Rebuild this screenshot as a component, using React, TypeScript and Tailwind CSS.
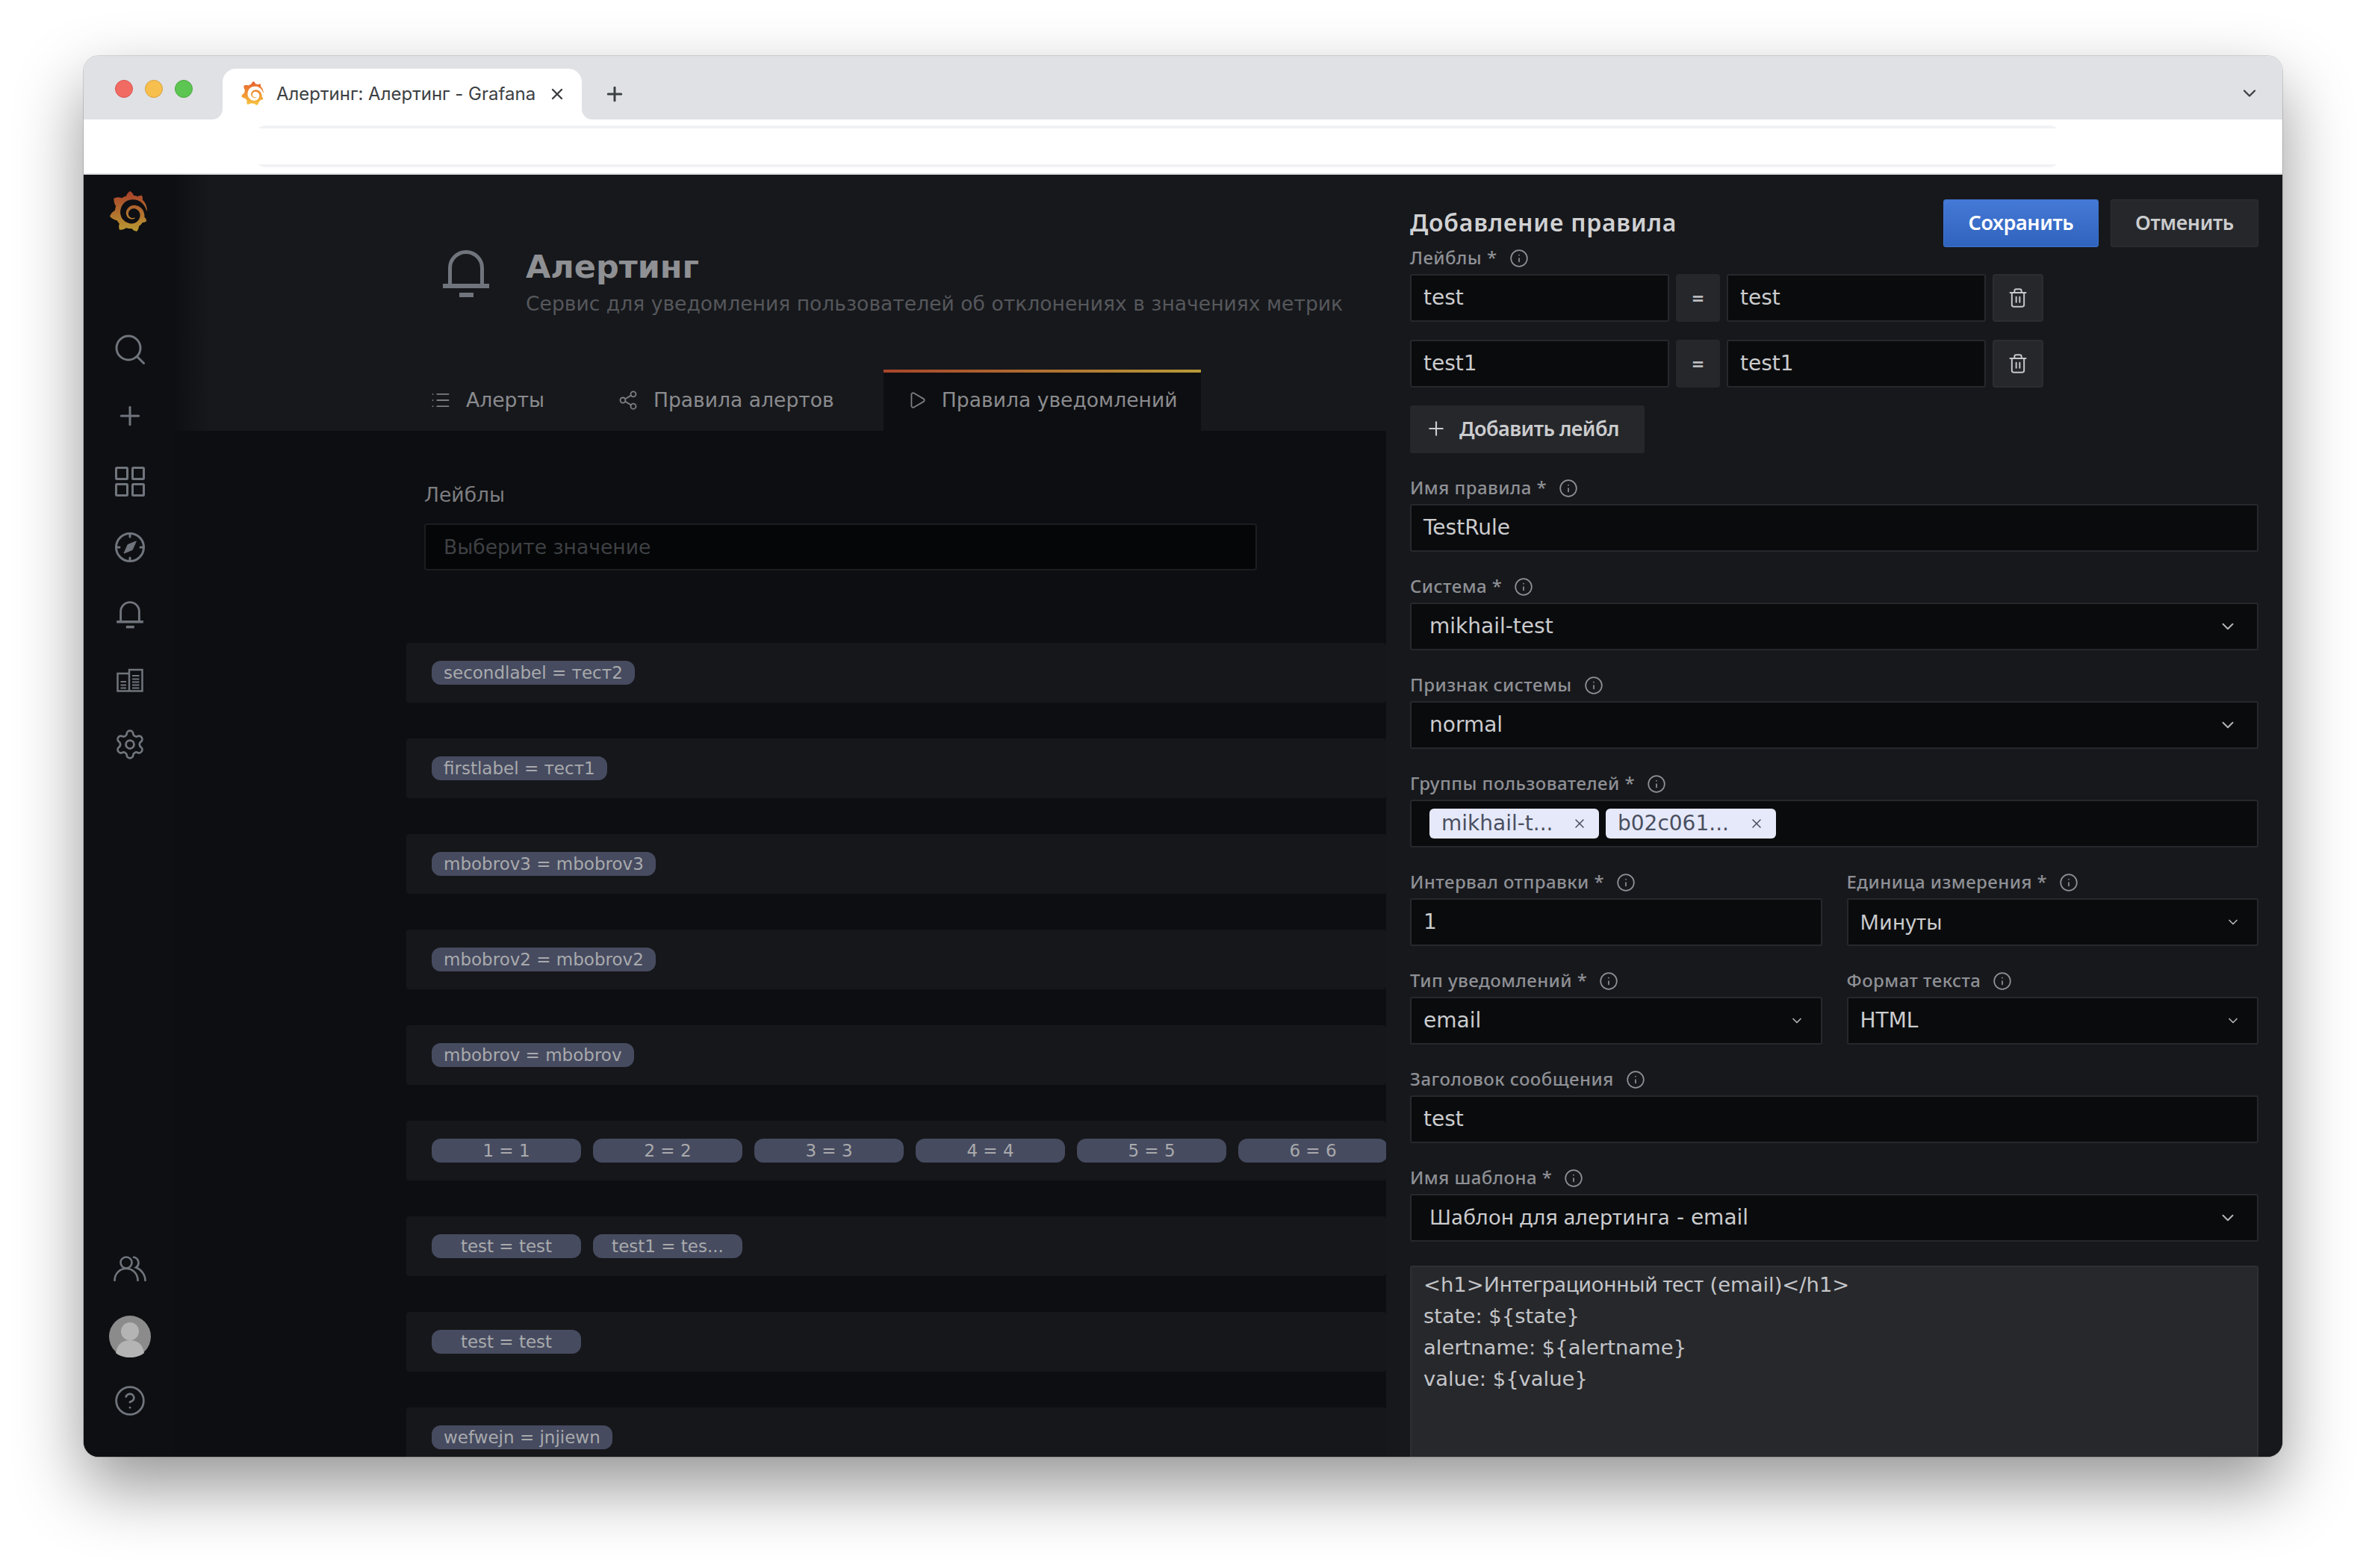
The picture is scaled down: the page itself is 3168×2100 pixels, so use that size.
import React from "react";
import { SiGrafana } from "react-icons/si";
import { ChevronDown, CircleHelp, Info, List, Play, Plus, Settings, Share2, Trash2, X } from "lucide-react";

function Gradients() {
  return (
    <svg width="0" height="0" className="absolute">
      <defs>
        <linearGradient id="logoDim" x1="0" y1="0" x2="0" y2="1">
          <stop offset="0" stopColor="#a8402a" />
          <stop offset="1" stopColor="#b99a32" />
        </linearGradient>
        <linearGradient id="logoBright" x1="0" y1="0" x2="0" y2="1">
          <stop offset="0" stopColor="#e8602c" />
          <stop offset="1" stopColor="#f7c53f" />
        </linearGradient>
      </defs>
    </svg>
  );
}

function Mixed({ text, cyr = "tracking-[0.3px]", latin = "text-[28px]" }: { text: string; cyr?: string; latin?: string }) {
  const parts = text.split(/([\u0400-\u04FF]+(?: [\u0400-\u04FF]+)*)/).filter(Boolean);
  return (
    <>
      {parts.map((p, i) =>
        /[\u0400-\u04FF]/.test(p) ? (
          <span key={i} className={cyr}>{p}</span>
        ) : (
          <span key={i} className={`whitespace-pre font-['DejaVu_Sans',sans-serif] ${latin}`}>{p}</span>
        )
      )}
    </>
  );
}

function BellIcon({ w, h }: { w: number; h: number }) {
  return (
    <svg width={w} height={h} viewBox="0 0 62 66" fill="none" className="shrink-0">
      <path d="M9.5 49V26A21.5 21.5 0 0 1 52.5 26V49" stroke="#70757d" strokeWidth="5" />
      <rect x="0" y="47" width="62" height="6" fill="#70757d" />
      <rect x="22" y="59" width="19" height="6" fill="#70757d" />
    </svg>
  );
}

const sideIcon = "text-[#70757d]";

function SearchIcon() {
  return (
    <svg width="40" height="40" viewBox="0 0 40 40" fill="none" stroke="#70757d" strokeWidth="3" strokeLinecap="round">
      <circle cx="18" cy="18" r="16" />
      <path d="M30 30l8.500 8.500" />
    </svg>
  );
}
function GridIcon() {
  return (
    <svg width="40" height="40" viewBox="0 0 40 40" fill="none" stroke="#70757d" strokeWidth="3">
      <rect x="1.500" y="1.500" width="15" height="15" rx="1" />
      <rect x="23.500" y="1.500" width="15" height="15" rx="1" />
      <rect x="1.500" y="23.500" width="15" height="15" rx="1" />
      <rect x="23.500" y="23.500" width="15" height="15" rx="1" />
    </svg>
  );
}
function CompassIcon() {
  return (
    <svg width="40" height="40" viewBox="0 0 40 40" fill="none" stroke="#70757d" strokeWidth="3" strokeLinecap="round">
      <circle cx="20" cy="20" r="18.500" />
      <path d="M20 3v3M20 34v3M3 20h3M34 20h3" />
      <path d="M28 12l-11 4.500L12 28l11-4.500z" fill="#70757d" strokeWidth="1" strokeLinejoin="round" />
    </svg>
  );
}
function DashIcon() {
  return (
    <svg width="36" height="32" viewBox="0 0 36 32" fill="none" stroke="#70757d" strokeWidth="2.500">
      <path d="M17 7H1.500v23.500H17M17 30.500V2H34.500V30.500H17" />
      <path d="M5.500 18H13M5.500 22.500H13M5.500 26.500H13M21 10H30.500M21 14.500H30.500M21 18.500H30.500M21 22.500H30.500M21 26.500H30.500" strokeWidth="2" />
    </svg>
  );
}
function UsersIcon() {
  return (
    <svg width="44" height="34" viewBox="0 0 44 34" fill="none" stroke="#70757d" strokeWidth="2.600" strokeLinecap="round">
      <circle cx="17" cy="9" r="7.500" />
      <path d="M1.500 33C1.500 24 8 17 17 17C26 17 32.500 24 32.500 33" />
      <path d="M27 1.800A7.500 7.500 0 0 1 30 15.500C37 18 42.500 25 42.500 33" />
    </svg>
  );
}
function AvatarIcon() {
  return (
    <svg width="56" height="56" viewBox="0 0 56 56">
      <circle cx="28" cy="28" r="28" fill="#8b8b8b" />
      <ellipse cx="28" cy="21" rx="12" ry="12" fill="#b4b4b4" />
      <path d="M9 50C11 38 18 33 28 33C38 33 45 38 47 50C42 54 35 56 28 56C21 56 14 54 9 50Z" fill="#b4b4b4" />
    </svg>
  );
}

function Field({ label, info = true, className = "", children }: { label: string; info?: boolean; className?: string; children: React.ReactNode }) {
  return (
    <div className={className}>
      <div className="mb-[7px] flex h-[28px] items-center gap-[16px] text-[24px] font-medium leading-none tracking-[0.45px] text-[#8e9095]">
        <span className="-mt-[2px]">{label}</span>
        {info && <Info size={26} strokeWidth={1.6} className="text-[#8e9095]" />}
      </div>
      {children}
    </div>
  );
}

function TextBox({ value, className = "" }: { value: string; className?: string }) {
  return (
    <div className={`flex h-[64px] items-center rounded-[3px] border-2 border-[#26282c] bg-[#0a0b0d] pl-[16px] text-[28px] leading-none text-[#cbccce] ${className}`}>
      <span className="-mt-[3px]"><Mixed text={value} /></span>
    </div>
  );
}

function SelectBox({ value, wide = false }: { value: string; wide?: boolean }) {
  return (
    <div className={`flex h-[64px] items-center justify-between rounded-[3px] border-2 border-[#26282c] bg-[#0a0b0d] text-[28px] leading-none text-[#cbccce] ${wide ? "pl-[24px] pr-[26px]" : "pl-[16px] pr-[22px]"}`}>
      <span className="-mt-[3px]"><Mixed text={value} /></span>
      <ChevronDown size={wide ? 26 : 20} strokeWidth={wide ? 1.8 : 2} className="text-[#b5b6b9]" />
    </div>
  );
}

function LabelRow({ value, className = "" }: { value: string; className?: string }) {
  return (
    <div className={`flex items-center gap-[9px] ${className}`}>
      <TextBox value={value} className="w-[347px]" />
      <div className="flex h-[64px] w-[59px] items-center justify-center rounded-[4px] bg-[#25272b] text-[28px] font-semibold text-[#b9babd]">=</div>
      <TextBox value={value} className="w-[347px]" />
      <div className="flex h-[64px] w-[68px] items-center justify-center rounded-[4px] border-2 border-[#2b2d31] bg-[#25272b]">
        <Trash2 size={28} strokeWidth={1.7} className="text-[#c6c7ca]" />
      </div>
    </div>
  );
}

function Chip({ text, fixed = false }: { text: string; fixed?: boolean }) {
  return (
    <span className={`flex h-[32px] shrink-0 items-center rounded-[12px] bg-[#464b60] text-[23px] leading-none text-[#a9aaac] ${fixed ? "w-[200px] justify-center" : "px-[16px]"}`}>
      {text}
    </span>
  );
}

function Row({ children }: { children: React.ReactNode }) {
  return (
    <div className="mb-[48px] flex h-[80px] shrink-0 items-center gap-[16px] overflow-hidden rounded-[4px] bg-[#16171a] pl-[34px]">
      {children}
    </div>
  );
}

function MainTab({ icon, text, active = false }: { icon: React.ReactNode; text: string; active?: boolean }) {
  return (
    <div className={`flex h-[82px] items-center gap-[20px] rounded-t-[3px] px-[32px] ${active ? "border-t-4 border-[#a8452a] bg-[#0d0e11] pb-[4px] [border-image:linear-gradient(90deg,#a8452a,#b79a38)_1]" : ""}`}>
      {icon}
      <span className="text-[26.6px] text-[#8a8b8e]">{text}</span>
    </div>
  );
}

export default function App() {
  return (
    <div className="h-[2100px] w-[3168px] overflow-hidden bg-white pl-[112px] pt-[75px] font-['Noto_Sans','Open_Sans',sans-serif]">
      <Gradients />
      <div className="flex h-[1876px] w-[2944px] flex-col overflow-hidden rounded-[20px] bg-white shadow-[0_0_0_1px_rgba(0,0,0,0.14),0_40px_90px_rgba(0,0,0,0.42)]">
        {/* tab strip */}
        <div className="flex h-[85px] shrink-0">
          <div className="flex w-[186px] items-start gap-[16px] rounded-br-[14px] bg-[#dfe1e5] pl-[42px] pt-[32px]">
            <span className="h-[24px] w-[24px] rounded-full border border-[#d9544c] bg-[#f16b63]" />
            <span className="h-[24px] w-[24px] rounded-full border border-[#d9a13a] bg-[#f7bf4d]" />
            <span className="h-[24px] w-[24px] rounded-full border border-[#4aa83f] bg-[#5dc552]" />
          </div>
          <div className="flex w-[481px] flex-col bg-[#dfe1e5]">
            <div className="mt-[17px] flex flex-1 items-start rounded-t-[18px] bg-white pl-[24px] pt-[17px]">
              <SiGrafana size={32} fill="url(#logoBright)" />
              <span className="ml-[16px] w-[347px] whitespace-nowrap font-['Inter',sans-serif] text-[24px] leading-[34px] text-[#3c4043]">Алертинг: Алертинг - Grafana</span>
              <X size={24} strokeWidth={2.4} className="ml-[17px] mt-[5px] text-[#3c4043]" />
            </div>
          </div>
          <div className="flex flex-1 items-start justify-between rounded-bl-[14px] bg-[#dfe1e5] pl-[29px] pr-[30px] pt-[36px]">
            <Plus size={30} strokeWidth={2.4} className="text-[#3c4043]" />
            <ChevronDown size={28} strokeWidth={2} className="text-[#3c4043]" />
          </div>
        </div>
        {/* toolbar */}
        <div className="flex h-[74px] shrink-0 items-start border-b-2 border-[#dfe1e5] bg-white pl-[228px] pt-[8px]">
          <div className="flex h-[56px] w-[2420px] rounded-[16px] bg-[#f1f2f4] py-[4px]">
            <div className="h-full w-full bg-white" />
          </div>
        </div>
        {/* app */}
        <div className="flex min-h-0 flex-1 bg-[#0d0e11]">
          <aside className="flex w-[120px] shrink-0 flex-col items-center bg-[#0e0f12] pl-[3px] pt-[22px]">
            <SiGrafana size={54} fill="url(#logoDim)" className="-ml-[4px]" />
            <div className="mt-[138px] flex h-[40px] items-center justify-center"><SearchIcon /></div>
            <div className="mt-[49px] flex h-[40px] items-center justify-center"><Plus size={40} strokeWidth={1.8} className={sideIcon} /></div>
            <div className="mt-[48px] flex h-[40px] items-center justify-center"><GridIcon /></div>
            <div className="mt-[48px] flex h-[40px] items-center justify-center"><CompassIcon /></div>
            <div className="mt-[50px] flex h-[40px] items-center justify-center"><BellIcon w={36} h={38} /></div>
            <div className="mt-[48px] flex h-[40px] items-center justify-center"><DashIcon /></div>
            <div className="mt-[46px] flex h-[40px] items-center justify-center"><Settings size={44} strokeWidth={1.5} className={sideIcon} /></div>
            <div className="mt-[662px] flex h-[40px] items-center justify-center"><UsersIcon /></div>
            <div className="mt-[43px] flex h-[56px] items-center justify-center"><AvatarIcon /></div>
            <div className="mt-[38px] flex h-[40px] items-center justify-center"><CircleHelp size={44} strokeWidth={1.5} className={sideIcon} /></div>
          </aside>

          <main className="flex w-[1624px] shrink-0 flex-col overflow-hidden bg-[#0d0e11] font-['DejaVu_Sans',sans-serif]">
            <header className="h-[343px] shrink-0 bg-[linear-gradient(90deg,#0e0f12_0,#17181c_50px)] pl-[312px]">
              <div className="flex pl-[49px] pt-[99px]">
                <BellIcon w={62} h={66} />
                <div className="ml-[49px] -mt-[1px]">
                  <h1 className="h-[50px] text-[43px] font-semibold leading-[50px] text-[#8f9093]">Алертинг</h1>
                  <p className="mt-[5px] h-[40px] whitespace-nowrap text-[26.6px] leading-[40px] text-[#55575b]">Сервис для уведомления пользователей об отклонениях в значениях метрик</p>
                </div>
              </div>
              <div className="mt-[68px] flex gap-[34px]">
                <MainTab text="Алерты" icon={<List size={28} strokeWidth={1.6} className="text-[#7b7d80]" />} />
                <MainTab text="Правила алертов" icon={<Share2 size={28} strokeWidth={1.6} className="text-[#7b7d80]" />} />
                <MainTab active text="Правила уведомлений" icon={<Play size={26} strokeWidth={1.7} className="text-[#7b7d80]" />} />
              </div>
            </header>
            <div className="flex min-h-0 flex-1 flex-col pl-[312px]">
              <div className="pl-[24px] pt-[66px]">
                <div className="h-[40px] text-[26.6px] leading-[40px] text-[#7c7d80]">Лейблы</div>
                <div className="mt-[18px] flex h-[63px] w-[1115px] items-center rounded-[4px] border-2 border-[#1c1d20] bg-[#050607] pl-[24px] text-[26.6px] text-[#3e4044]">Выберите значение</div>
              </div>
              <div className="mt-[97px] flex flex-col">
                <Row><Chip text="secondlabel = тест2" /></Row>
                <Row><Chip text="firstlabel = тест1" /></Row>
                <Row><Chip text="mbobrov3 = mbobrov3" /></Row>
                <Row><Chip text="mbobrov2 = mbobrov2" /></Row>
                <Row><Chip text="mbobrov = mbobrov" /></Row>
                <Row>
                  <Chip fixed text="1 = 1" />
                  <Chip fixed text="2 = 2" />
                  <Chip fixed text="3 = 3" />
                  <Chip fixed text="4 = 4" />
                  <Chip fixed text="5 = 5" />
                  <Chip fixed text="6 = 6" />
                </Row>
                <Row>
                  <Chip fixed text="test = test" />
                  <Chip fixed text="test1 = tes..." />
                </Row>
                <Row><Chip fixed text="test = test" /></Row>
                <Row><Chip text="wefwejn = jnjiewn" /></Row>
              </div>
            </div>
          </main>

          <section className="flex w-[1200px] shrink-0 flex-col overflow-hidden bg-[#17181c] pl-[32px] pr-[32px] pt-[33px] *:shrink-0">
            <div className="flex h-[64px] items-center justify-between">
              <h2 className="-mt-[2px] text-[32px] font-semibold tracking-[0.78px] text-[#d0d1d3]">Добавление правила</h2>
              <div className="flex gap-[16px]">
                <button className="h-[64px] w-[208px] rounded-[3px] border border-[#3f74d0] bg-[linear-gradient(180deg,#4579d6,#2f63bd)] pb-[2px] text-[27px] font-semibold tracking-[-0.4px] text-white">Сохранить</button>
                <button className="h-[64px] w-[198px] rounded-[3px] border border-[#2d2f33] bg-[#25272b] pb-[2px] text-[27px] font-semibold tracking-[-0.4px] text-[#cbccce]">Отменить</button>
              </div>
            </div>
            <Field label="Лейблы *" className="mt-[1px]">
              <LabelRow value="test" />
            </Field>
            <LabelRow value="test1" className="mt-[24px]" />
            <button className="mt-[24px] flex h-[64px] w-[314px] items-center rounded-[3px] bg-[#25272b] pb-[2px] pl-[20px] text-[27px] font-semibold tracking-[-0.5px] text-[#cbccce]">
              <Plus size={30} strokeWidth={1.7} className="mr-[16px] text-[#cbccce]" />
              Добавить лейбл
            </button>
            <Field label="Имя правила *" className="mt-[33px]"><TextBox value="TestRule" /></Field>
            <Field label="Система *" className="mt-[33px]"><SelectBox wide value="mikhail-test" /></Field>
            <Field label="Признак системы" className="mt-[33px]"><SelectBox wide value="normal" /></Field>
            <Field label="Группы пользователей *" className="mt-[33px]">
              <div className="flex h-[64px] items-center gap-[9px] rounded-[3px] border-2 border-[#26282c] bg-[#0a0b0d] pl-[24px]">
                <span className="flex h-[40px] w-[227px] items-center justify-between rounded-[6px] bg-[#e6e9fa] pl-[16px] pr-[16px] text-[28px] leading-none text-[#4a4f5f]">
                  <span className="-mt-[2px]"><Mixed text="mikhail-t..." /></span><X size={20} strokeWidth={1.8} />
                </span>
                <span className="flex h-[40px] w-[228px] items-center justify-between rounded-[6px] bg-[#e6e9fa] pl-[16px] pr-[16px] text-[28px] leading-none text-[#4a4f5f]">
                  <span className="-mt-[2px]"><Mixed text="b02c061..." /></span><X size={20} strokeWidth={1.8} />
                </span>
              </div>
            </Field>
            <div className="mt-[33px] grid grid-cols-2 gap-x-[33px] gap-y-[33px]">
              <Field label="Интервал отправки *"><TextBox value="1" /></Field>
              <Field label="Единица измерения *"><SelectBox value="Минуты" /></Field>
              <Field label="Тип уведомлений *"><SelectBox value="email" /></Field>
              <Field label="Формат текста"><SelectBox value="HTML" /></Field>
            </div>
            <Field label="Заголовок сообщения" className="mt-[33px]"><TextBox value="test" /></Field>
            <Field label="Имя шаблона *" className="mt-[33px]"><SelectBox wide value="Шаблон для алертинга - email" /></Field>
            <div className="mt-[32px] h-[320px] rounded-[3px] border-2 border-[#2f3034] bg-[#27282b] pl-[16px] pt-[1px] text-[28px] leading-[42px] text-[#c3c5c9]">
              <div className="h-[42px] whitespace-nowrap"><Mixed cyr="tracking-[-0.2px]" latin="text-[27.4px]" text="<h1>Интеграционный тест (email)</h1>" /></div>
              <div className="h-[42px] whitespace-nowrap"><Mixed latin="text-[27.4px]" text="state: ${state}" /></div>
              <div className="h-[42px] whitespace-nowrap"><Mixed latin="text-[27.4px]" text="alertname: ${alertname}" /></div>
              <div className="h-[42px] whitespace-nowrap"><Mixed latin="text-[27.4px]" text="value: ${value}" /></div>
            </div>
          </section>
        </div>
      </div>
    </div>
  );
}
